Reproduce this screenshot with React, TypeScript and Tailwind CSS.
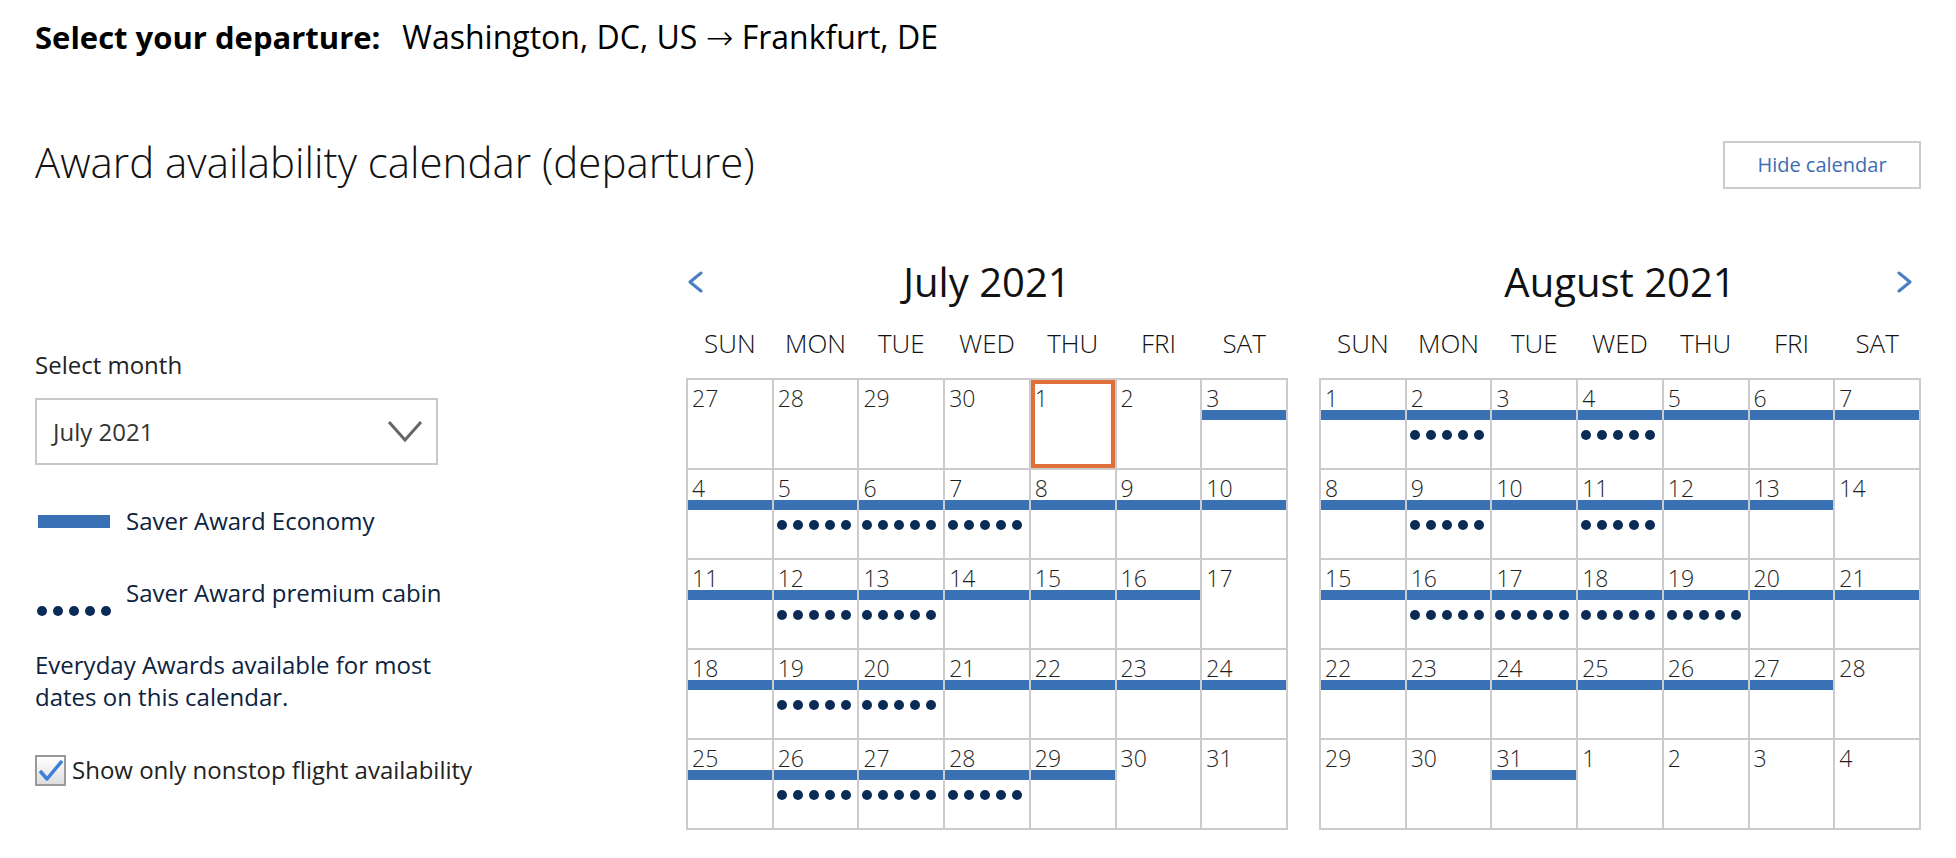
import clsx from 'clsx';

const WEEKDAYS = ['SUN', 'MON', 'TUE', 'WED', 'THU', 'FRI', 'SAT'];

// b = saver economy bar, d = premium cabin dots, t = selected day
const JULY = [
  ['27', '28', '29', '30', '1t', '2', '3b'],
  ['4b', '5bd', '6bd', '7bd', '8b', '9b', '10b'],
  ['11b', '12bd', '13bd', '14b', '15b', '16b', '17'],
  ['18b', '19bd', '20bd', '21b', '22b', '23b', '24b'],
  ['25b', '26bd', '27bd', '28bd', '29b', '30', '31'],
];

const AUGUST = [
  ['1b', '2bd', '3b', '4bd', '5b', '6b', '7b'],
  ['8b', '9bd', '10b', '11bd', '12b', '13b', '14'],
  ['15b', '16bd', '17bd', '18bd', '19bd', '20b', '21b'],
  ['22b', '23b', '24b', '25b', '26b', '27b', '28'],
  ['29', '30', '31b', '1', '2', '3', '4'],
];

const Dots = ({ className }: { className?: string }) => (
  <div className={clsx('flex gap-[6px]', className)}>
    {Array.from({ length: 5 }, (_, i) => (
      <span key={i} className="h-[10px] w-[10px] rounded-full bg-[#0b2b57]" />
    ))}
  </div>
);

const Chevron = ({ dir }: { dir: 'left' | 'right' }) => (
  <svg width="16" height="22" viewBox="0 0 16 22" fill="none">
    <polyline
      points={dir === 'left' ? '14,2 3,11 14,20' : '2,2 13,11 2,20'}
      stroke="#4a7fc4"
      strokeWidth="3"
      strokeLinecap="round"
      strokeLinejoin="round"
    />
  </svg>
);

const DayCell = ({ code }: { code: string }) => {
  const n = code.replace(/[a-z]/g, '');
  const bar = code.includes('b');
  const dots = code.includes('d');
  const today = code.includes('t');
  return (
    <div className={clsx('h-[88px] bg-white', today && 'shadow-[inset_0_0_0_4px_#e0703a]')}>
      <div className="pl-[4px] pt-[7px] text-[23px] leading-[23px] font-light text-[#1e1e1e]">{n}</div>
      <div className={clsx('h-[10px]', bar && 'bg-[#3a71b5]')} />
      {dots && <Dots className="mt-[10px] pl-[3px]" />}
    </div>
  );
};

const Month = ({ title, weeks, prev, next }: { title: string; weeks: string[][]; prev?: boolean; next?: boolean }) => (
  <div className="w-[602px]">
    <div className="grid h-[52px] grid-cols-[24px_1fr_24px] items-center">
      <div className="flex justify-start pl-[1px]">{prev && <Chevron dir="left" />}</div>
      <div className="text-center text-[40px] leading-[52px] text-[#111]">{title}</div>
      <div className="flex justify-start">{next && <Chevron dir="right" />}</div>
    </div>
    <div className="mt-[18px] grid grid-cols-7 gap-[2px] px-[2px] text-center text-[26px] leading-[34px] font-light text-[#111]">
      {WEEKDAYS.map((d) => (
        <div key={d}>{d}</div>
      ))}
    </div>
    <div className="mt-[18px] grid grid-cols-7 gap-[2px] bg-[#cccccc] p-[2px]">
      {weeks.flat().map((code, i) => (
        <DayCell key={i} code={code} />
      ))}
    </div>
  </div>
);

const App = () => {
  return (
    <div className="min-h-screen bg-white px-[35px] font-['Open_Sans',sans-serif] text-[#1a1a1a]">
      <div className="flex h-[56px] items-baseline pt-[18px] text-[31px] leading-[38px] text-black">
        <span className="font-bold">Select your departure:</span>
        <span className="ml-[22px] whitespace-pre text-[32px]">
          Washington, DC, US <span className="font-['DejaVu_Sans',sans-serif] text-[33px] font-extralight">→</span> Frankfurt, DE
        </span>
      </div>

      <div className="mt-[80px] flex items-start justify-between">
        <h1 className="text-[42px] leading-[52px] font-light text-[#111]">Award availability calendar (departure)</h1>
        <button className="mt-[5px] h-[48px] w-[198px] border-2 border-[#cccccc] bg-white text-[20px] text-[#3b6db3]">
          Hide calendar
        </button>
      </div>

      <div className="flex">
        <aside className="w-[651px] shrink-0 pt-[160px] text-[24px] leading-[32px]">
          <div className="text-[#222]">Select month</div>
          <div className="mt-[17px] flex h-[67px] w-[403px] items-center justify-between border-2 border-[#c8c8c8] pl-[16px] pr-[13px]">
            <span className="text-[#333]">July 2021</span>
            <svg width="36" height="23" viewBox="0 0 36 23" fill="none">
              <polyline points="2,2 18,20 34,2" stroke="#666" strokeWidth="3" />
            </svg>
          </div>

          <div className="mt-[40px] flex items-center">
            <span className="ml-[3px] h-[13px] w-[72px] bg-[#3a71b5]" />
            <span className="ml-[16px] text-[#0c2340]">Saver Award Economy</span>
          </div>

          <div className="mt-[40px] flex items-start">
            <Dots className="ml-[2px] mt-[29px]" />
            <span className="ml-[15px] text-[#0c2340]">Saver Award premium cabin</span>
          </div>

          <p className="mt-[33px] w-[420px] text-[#0c2340]">Everyday Awards available for most dates on this calendar.</p>

          <label className="mt-[41px] flex items-center gap-[6px] text-[#222]">
            <span className="flex h-[31px] w-[31px] items-center justify-center border-2 border-[#9a9a9a] bg-linear-to-b from-white to-[#dedede]">
              <svg width="27" height="27" viewBox="0 0 27 27" fill="none">
                <polyline points="3,14 10,22 25,4" stroke="#3b7fd8" strokeWidth="3.5" strokeLinejoin="round" />
              </svg>
            </span>
            Show only nonstop flight availability
          </label>
        </aside>

        <section className="flex flex-1 justify-between pt-[67px]">
          <Month title="July 2021" weeks={JULY} prev />
          <Month title="August 2021" weeks={AUGUST} next />
        </section>
      </div>
    </div>
  );
};

export default App;
